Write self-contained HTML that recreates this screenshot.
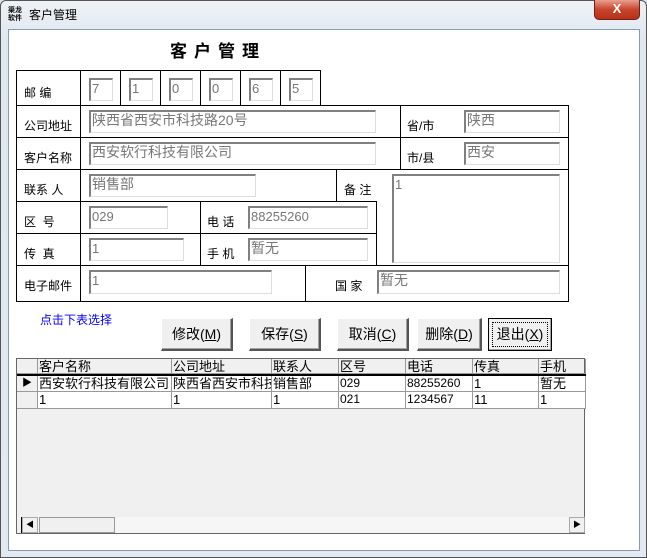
<!DOCTYPE html><html><head><meta charset="utf-8"><style>
*{margin:0;padding:0;box-sizing:border-box}
body{width:647px;height:558px;background:#dbe5ef;position:relative;overflow:hidden;font-family:"Liberation Sans","Noto Sans CJK SC",sans-serif;font-size:13px;color:#000}
.a{position:absolute}
.frame{left:0;top:0;width:647px;height:558px;background:linear-gradient(#eef2f6,#dfe7ef 40px,#e2e9f0);border:1px solid #555;border-radius:6px 6px 0 0}
.client{left:8px;top:29px;width:632px;height:522px;background:#fff;border:1px solid #8a9bb0}
.ln{position:absolute;background:#000}
.in{position:absolute;background:#fff;border-top:2px solid #808080;border-left:2px solid #808080;border-right:1px solid #ddd;border-bottom:1px solid #ddd;color:#777;font-size:13px;line-height:17px;padding-left:1px;white-space:nowrap;overflow:hidden}
.lb{position:absolute;font-size:12px;white-space:nowrap}
.btn{position:absolute;background:#f0f0f0;border:1px solid #fff;border-right:2px solid #555;border-bottom:2px solid #555;box-shadow:inset -1px -1px 0 #a0a0a0;text-align:center;line-height:30px;font-size:14px}
.grid{left:16px;top:358px;width:569px;height:176px;background:#f0f0f0;border:1px solid #666}
.c{position:absolute;height:16px;border-right:1px solid #999;border-bottom:1px solid #999;font-size:13px;line-height:15px;white-space:nowrap;overflow:hidden;padding-left:1px}
</style></head><body>
<div class="a frame"></div>
<div class="a" style="left:8px;top:7px;font-size:7px;line-height:8px;font-weight:bold">渠龙<br>软件</div>
<div class="a" style="left:29px;top:6px;font-size:12px">客户管理</div>
<div class="a" style="left:594px;top:0;width:46px;height:20px;background:linear-gradient(#e8a090,#c8442c 50%,#b83018);border:1px solid #6b2318;border-top:none;border-radius:0 0 5px 5px;color:#fff;text-align:center;font-weight:bold;font-size:13px;line-height:18px">X</div>
<div class="a client"></div>
<div class="a" style="left:170px;top:37px;font-size:17px;font-weight:bold;letter-spacing:7px">客户管理</div>

<div class="ln" style="left:16px;top:70px;width:305px;height:1px"></div>
<div class="ln" style="left:16px;top:105px;width:553px;height:1px"></div>
<div class="ln" style="left:16px;top:137px;width:553px;height:1px"></div>
<div class="ln" style="left:16px;top:169px;width:553px;height:1px"></div>
<div class="ln" style="left:16px;top:201px;width:361px;height:1px"></div>
<div class="ln" style="left:16px;top:233px;width:361px;height:1px"></div>
<div class="ln" style="left:16px;top:265px;width:553px;height:1px"></div>
<div class="ln" style="left:16px;top:301px;width:553px;height:1px"></div>
<div class="ln" style="left:16px;top:70px;width:1px;height:232px"></div>
<div class="ln" style="left:80px;top:70px;width:1px;height:232px"></div>
<div class="ln" style="left:120px;top:70px;width:1px;height:35px"></div>
<div class="ln" style="left:160px;top:70px;width:1px;height:35px"></div>
<div class="ln" style="left:200px;top:70px;width:1px;height:35px"></div>
<div class="ln" style="left:240px;top:70px;width:1px;height:35px"></div>
<div class="ln" style="left:280px;top:70px;width:1px;height:35px"></div>
<div class="ln" style="left:320px;top:70px;width:1px;height:35px"></div>
<div class="ln" style="left:568px;top:105px;width:1px;height:197px"></div>
<div class="ln" style="left:400px;top:105px;width:1px;height:64px"></div>
<div class="ln" style="left:336px;top:169px;width:1px;height:32px"></div>
<div class="ln" style="left:200px;top:201px;width:1px;height:64px"></div>
<div class="ln" style="left:376px;top:201px;width:1px;height:64px"></div>
<div class="ln" style="left:305px;top:265px;width:1px;height:37px"></div>

<div class="lb" style="left:24px;top:84px">邮 编</div>
<div class="lb" style="left:24px;top:117px">公司地址</div>
<div class="lb" style="left:24px;top:149px">客户名称</div>
<div class="lb" style="left:24px;top:181px">联系 人</div>
<div class="lb" style="left:24px;top:213px">区&nbsp;&nbsp;号</div>
<div class="lb" style="left:24px;top:245px">传&nbsp;&nbsp;真</div>
<div class="lb" style="left:24px;top:277px">电子邮件</div>
<div class="lb" style="left:407px;top:117px">省/市</div>
<div class="lb" style="left:407px;top:149px">市/县</div>
<div class="lb" style="left:344px;top:181px">备 注</div>
<div class="lb" style="left:207px;top:213px">电 话</div>
<div class="lb" style="left:207px;top:245px">手 机</div>
<div class="lb" style="left:335px;top:277px">国 家</div>

<div class="in" style="left:89px;top:78px;width:24px;height:23px">7</div>
<div class="in" style="left:129px;top:78px;width:24px;height:23px">1</div>
<div class="in" style="left:169px;top:78px;width:24px;height:23px">0</div>
<div class="in" style="left:209px;top:78px;width:24px;height:23px">0</div>
<div class="in" style="left:249px;top:78px;width:24px;height:23px">6</div>
<div class="in" style="left:289px;top:78px;width:24px;height:23px">5</div>
<div class="in" style="left:89px;top:110px;width:287px;height:23px;font-size:14px">陕西省西安市科技路20号</div>
<div class="in" style="left:89px;top:142px;width:287px;height:23px;font-size:14px">西安软行科技有限公司</div>
<div class="in" style="left:464px;top:110px;width:96px;height:23px;font-size:14px">陕西</div>
<div class="in" style="left:464px;top:142px;width:96px;height:23px;font-size:14px">西安</div>
<div class="in" style="left:89px;top:174px;width:167px;height:23px;font-size:14px">销售部</div>
<div class="in" style="left:392px;top:174px;width:168px;height:89px">1</div>
<div class="in" style="left:89px;top:206px;width:79px;height:23px">029</div>
<div class="in" style="left:248px;top:206px;width:120px;height:23px">88255260</div>
<div class="in" style="left:89px;top:238px;width:95px;height:23px">1</div>
<div class="in" style="left:248px;top:238px;width:120px;height:23px;font-size:14px">暂无</div>
<div class="in" style="left:89px;top:270px;width:183px;height:24px">1</div>
<div class="in" style="left:377px;top:270px;width:183px;height:24px;font-size:14px">暂无</div>

<div class="a" style="left:40px;top:311px;color:#0000ff;font-size:12px">点击下表选择</div>
<div class="btn" style="left:161px;top:318px;width:72px;height:33px">修改(<u>M</u>)</div>
<div class="btn" style="left:249px;top:318px;width:72px;height:33px">保存(<u>S</u>)</div>
<div class="btn" style="left:337px;top:318px;width:72px;height:33px">取消(<u>C</u>)</div>
<div class="btn" style="left:417px;top:318px;width:65px;height:33px">删除(<u>D</u>)</div>
<div class="btn" style="left:488px;top:318px;width:64px;height:33px;border:1px solid #000;outline:1px dotted #000;outline-offset:-5px">退出(<u>X</u>)</div>

<div class="a grid">
<div class="c" style="left:0;top:0;width:21px;height:15px"></div>
<div class="c" style="left:21px;top:0;width:134px;height:15px">客户名称</div>
<div class="c" style="left:155px;top:0;width:100px;height:15px">公司地址</div>
<div class="c" style="left:255px;top:0;width:67px;height:15px">联系人</div>
<div class="c" style="left:322px;top:0;width:67px;height:15px">区号</div>
<div class="c" style="left:389px;top:0;width:67px;height:15px">电话</div>
<div class="c" style="left:456px;top:0;width:66px;height:15px">传真</div>
<div class="c" style="left:522px;top:0;width:47px;height:15px">手机</div>
<div class="a" style="left:0;top:15px;width:569px;height:2px;background:#000"></div>
<div class="c" style="left:0;top:17px;width:21px;font-size:10px;padding-left:5px">▶</div>
<div class="c" style="left:21px;top:17px;width:134px;background:#fff">西安软行科技有限公司</div>
<div class="c" style="left:155px;top:17px;width:100px;background:#fff">陕西省西安市科技</div>
<div class="c" style="left:255px;top:17px;width:67px;background:#fff">销售部</div>
<div class="c" style="left:322px;top:17px;width:67px;background:#fff;font-size:12px">029</div>
<div class="c" style="left:389px;top:17px;width:67px;background:#fff;font-size:12px">88255260</div>
<div class="c" style="left:456px;top:17px;width:66px;background:#fff">1</div>
<div class="c" style="left:522px;top:17px;width:47px;background:#fff">暂无</div>
<div class="c" style="left:0;top:33px;width:21px;height:17px"></div>
<div class="c" style="left:21px;top:33px;width:134px;height:17px;background:#fff">1</div>
<div class="c" style="left:155px;top:33px;width:100px;height:17px;background:#fff">1</div>
<div class="c" style="left:255px;top:33px;width:67px;height:17px;background:#fff">1</div>
<div class="c" style="left:322px;top:33px;width:67px;height:17px;background:#fff;font-size:12px">021</div>
<div class="c" style="left:389px;top:33px;width:67px;height:17px;background:#fff;font-size:12px">1234567</div>
<div class="c" style="left:456px;top:33px;width:66px;height:17px;background:#fff">11</div>
<div class="c" style="left:522px;top:33px;width:47px;height:17px;background:#fff">1</div>
<div class="a" style="left:4px;top:158px;width:563px;height:16px;background:#f6f6f6;border-left:1px solid #000"></div>
<div class="a" style="left:5px;top:158px;width:16px;height:16px;background:#f0f0f0;border:1px solid #aaa;font-size:8px;text-align:center;line-height:14px">◀</div>
<div class="a" style="left:22px;top:158px;width:76px;height:16px;background:#f0f0f0;border:1px solid #999"></div>
<div class="a" style="left:552px;top:158px;width:16px;height:16px;background:#f0f0f0;border:1px solid #aaa;font-size:8px;text-align:center;line-height:14px">▶</div>
</div>
</body></html>
